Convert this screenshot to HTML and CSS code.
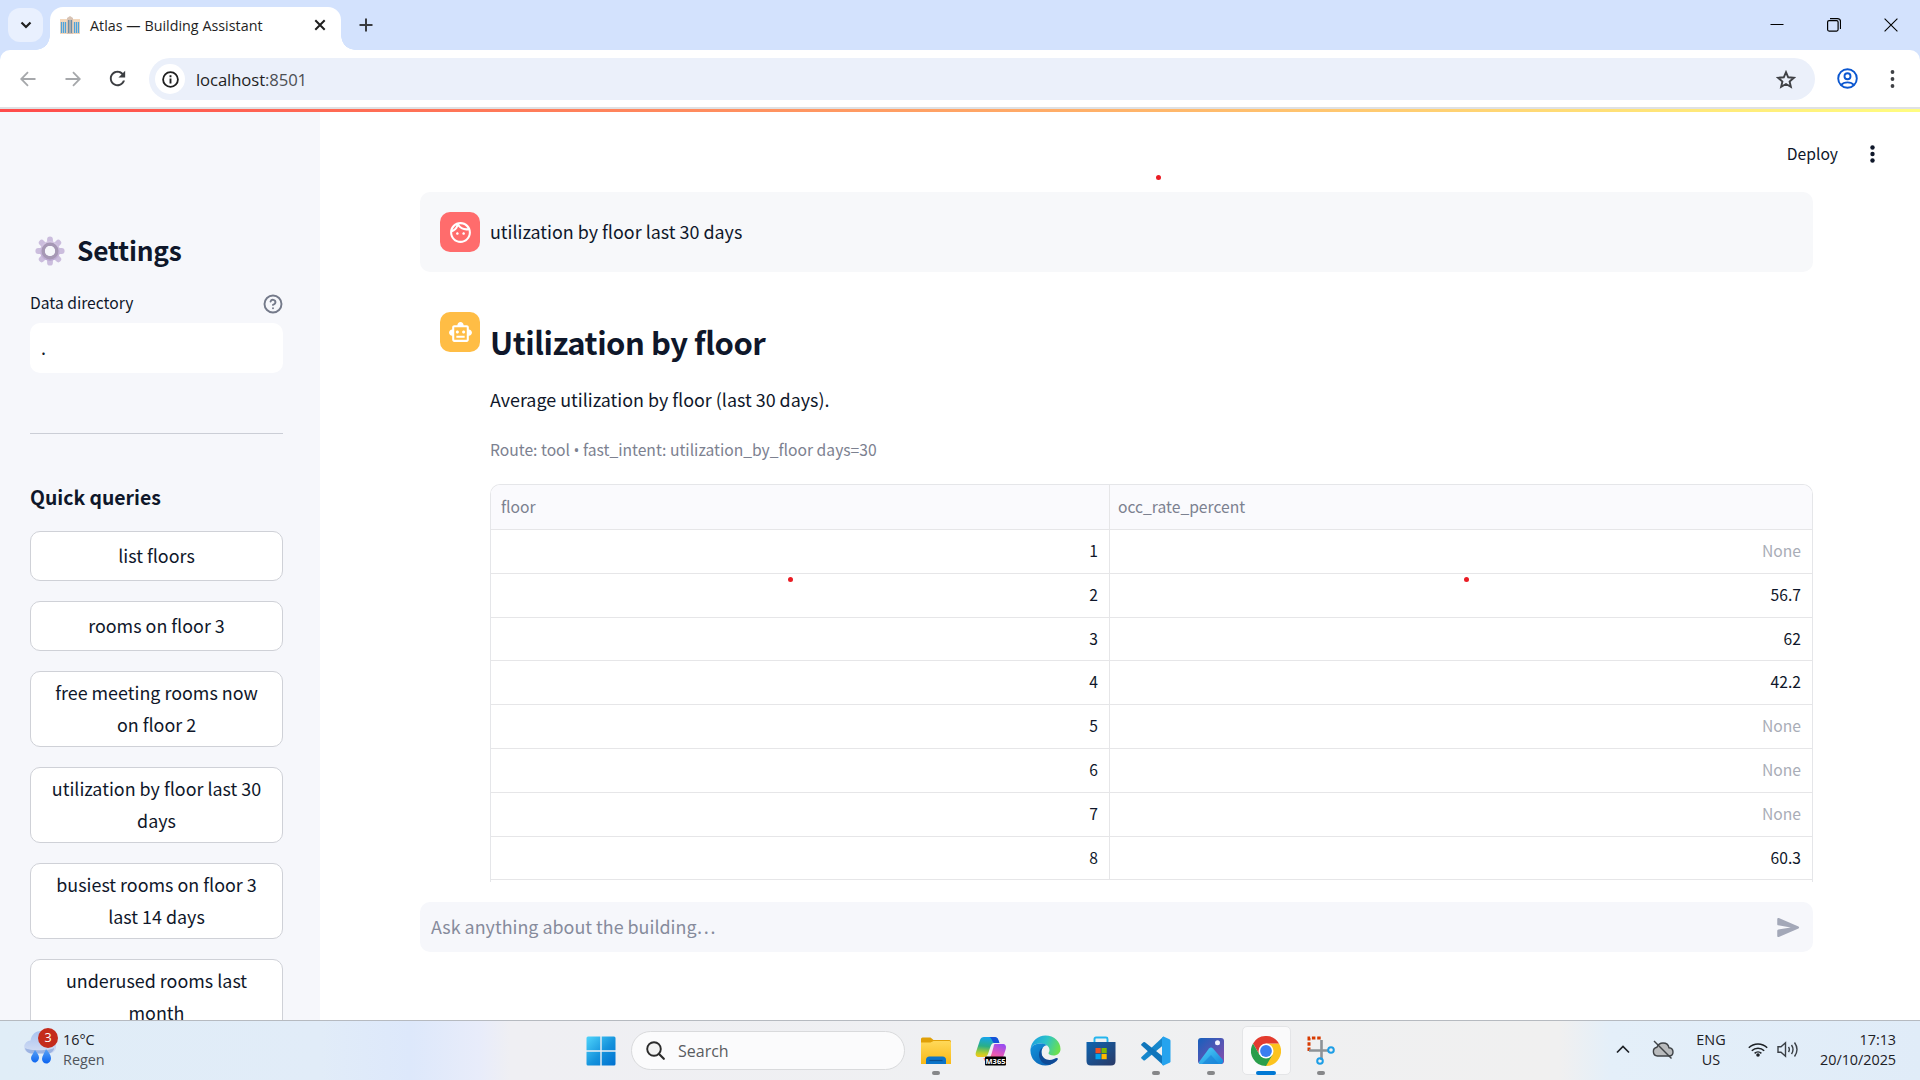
FILE: index.html
```html
<!DOCTYPE html>
<html lang="en">
<head>
<meta charset="utf-8">
<title>Atlas — Building Assistant</title>
<link rel="stylesheet" href="styles.css">
</head>
<body>
<div class="screen">
  <header class="tabstrip">
    <div class="tab-search"><svg width="12" height="8" viewBox="0 0 12 8"><path d="M1.5 1.5 6 6l4.5-4.5" fill="none" stroke="#1f1f1f" stroke-width="2.2"/></svg></div>
    <div class="tab">
      <svg class="favicon" width="20" height="18" viewBox="0 0 20 18"><path d="M0 3h7v15H0zM13 3h7v15h-7z" fill="#f3d8bd"/><path d="M7 2l3-2 3 2v16H7z" fill="#d8c3b4"/><path d="M1.5 6v11M3.5 6v11M5.5 6v11M14.5 6v11M16.5 6v11M18.5 6v11" stroke="#4fa3dc" stroke-width="1.3"/><path d="M8.7 4v13M11.3 4v13" stroke="#6b8ea8" stroke-width="1.4"/></svg>
      <span class="tab-title">Atlas — Building Assistant</span>
      <svg class="tab-close" width="12" height="12" viewBox="0 0 12 12"><path d="M1.3 1.3l9.4 9.4M10.7 1.3l-9.4 9.4" stroke="#1f1f1f" stroke-width="2"/></svg>
    </div>
    <svg class="tab-new" width="14" height="14" viewBox="0 0 14 14"><path d="M7 .5v13M.5 7h13" stroke="#3a3c40" stroke-width="2"/></svg>
    <div class="window-buttons">
      <svg width="14" height="14" viewBox="0 0 14 14"><path d="M.5 6.500h13" stroke="#000" stroke-width="1"/></svg>
      <svg width="14" height="14" viewBox="0 0 14 14"><rect x=".6" y="2.6" width="10.5" height="10.5" rx="1.5" fill="none" stroke="#000" stroke-width="1.2"/><path d="M3 .6h7.500a3 3 0 0 1 3 3V11" fill="none" stroke="#000" stroke-width="1.2"/></svg>
      <svg width="14" height="14" viewBox="0 0 14 14"><path d="M.6.6l12.800 12.800M13.400.6L.6 13.400" stroke="#000" stroke-width="1.1"/></svg>
    </div>
  </header>

  <div class="toolbar-back">
  <div class="toolbar">
    <svg class="nav-back" width="16" height="16" viewBox="0 0 16 16"><path d="M15.500 8H1.500M8 1.200 1.200 8 8 14.800" fill="none" stroke="#a6a8ab" stroke-width="1.800"/></svg>
    <svg class="nav-forward" width="16" height="16" viewBox="0 0 16 16"><path d="M.5 8h14M8 1.200 14.800 8 8 14.800" fill="none" stroke="#a6a8ab" stroke-width="1.800"/></svg>
    <svg class="nav-reload" width="23" height="23" viewBox="0 0 24 24"><path fill="#3c3e42" d="M17.650 6.350C16.200 4.900 14.210 4 12 4c-4.420 0-7.990 3.580-7.990 8s3.570 8 7.990 8c3.730 0 6.840-2.550 7.730-6h-2.080c-.82 2.330-3.040 4-5.650 4-3.310 0-6-2.690-6-6s2.690-6 6-6c1.660 0 3.140.69 4.220 1.780L13 11h7V4l-2.350 2.350z"/></svg>
    <div class="omnibox">
      <span class="site-info"><svg width="17" height="17" viewBox="0 0 17 17"><circle cx="8.500" cy="8.500" r="7.400" fill="none" stroke="#1f1f1f" stroke-width="1.800"/><path d="M8.500 7.500v5M8.500 4.300v1.900" stroke="#1f1f1f" stroke-width="1.900"/></svg></span>
      <span class="url">localhost<span class="port">:8501</span></span>
      <svg class="star" width="20" height="19" viewBox="0 0 20 19"><path d="M10 2.200l2.200 5.100 5.600.5-4.200 3.700 1.250 5.400L10 14l-4.850 2.900 1.250-5.400L2.200 7.800l5.600-.5z" fill="none" stroke="#3f4145" stroke-width="1.900"/></svg>
    </div>
    <svg class="profile" width="21" height="21" viewBox="0 0 21 21"><g fill="none" stroke="#0b57d0" stroke-width="1.900"><circle cx="10.500" cy="10.500" r="9.300"/><circle cx="10.500" cy="8.300" r="3"/><path d="M4 17c1.700-1.900 4-2.600 6.500-2.600s4.800.7 6.500 2.600"/></g></svg>
    <svg class="menu" width="5" height="18" viewBox="0 0 5 18"><g fill="#3f4145"><circle cx="2.500" cy="2" r="1.900"/><circle cx="2.500" cy="9" r="1.900"/><circle cx="2.500" cy="16" r="1.900"/></g></svg>
  </div>
  </div>
  <div class="toolbar-line"></div>

  <div class="app">
    <div class="rainbow"></div>
    <aside class="sidebar">
      <h2 class="settings">
        <svg width="30" height="30" viewBox="-15 -15 30 30"><defs><linearGradient id="gear" x1="0" y1="0" x2="0" y2="1"><stop offset="0" stop-color="#d6c9e4"/><stop offset="1" stop-color="#b9a6d0"/></linearGradient></defs><g stroke="#cbbddd" stroke-width="5.800" stroke-linecap="round"><path d="M0-11.700V11.700M-11.700 0H11.700M-8.300-8.300 8.300 8.300M-8.300 8.300 8.300-8.300"/></g><circle r="10" fill="url(#gear)"/><circle r="6.800" fill="#f6f7fb" stroke="#a698b5" stroke-width="3.400"/><circle r="5" fill="#f6f7fb"/></svg>
        <span>Settings</span>
      </h2>
      <div class="field-label">
        <span>Data directory</span>
        <svg width="20" height="20" viewBox="0 0 24 24" fill="none" stroke="#747a8a" stroke-width="2.300" stroke-linecap="round"><circle cx="12" cy="12" r="10.200"/><path d="M9.090 9a3 3 0 0 1 5.830 1c0 2-3 3-3 3M12 17h.01"/></svg>
      </div>
      <div class="field">.</div>
      <hr class="divider">
      <h4 class="quick-title">Quick queries</h4>
      <div class="queries">
        <div class="query">list floors</div>
        <div class="query">rooms on floor 3</div>
        <div class="query">free meeting rooms now<br>on floor 2</div>
        <div class="query">utilization by floor last 30<br>days</div>
        <div class="query">busiest rooms on floor 3<br>last 14 days</div>
        <div class="query">underused rooms last<br>month</div>
      </div>
    </aside>

    <main class="main">
      <div class="app-header">
        <span class="deploy">Deploy</span>
        <svg width="5" height="18" viewBox="0 0 5 18"><g fill="#0f172a"><circle cx="2.500" cy="2.500" r="2.200"/><circle cx="2.500" cy="9" r="2.200"/><circle cx="2.500" cy="15.500" r="2.200"/></g></svg>
      </div>
      <section class="chat">
        <article class="message user">
          <div class="avatar avatar-user"><svg width="25" height="25" viewBox="0 0 24 24"><path fill="#fff" d="M10.250 13c0 .69-.56 1.250-1.250 1.250S7.750 13.690 7.750 13s.56-1.250 1.250-1.250 1.250.56 1.250 1.250zM15 11.750c-.69 0-1.250.56-1.250 1.250s.56 1.250 1.250 1.250 1.250-.56 1.250-1.250-.56-1.250-1.250-1.250zm7 .25c0 5.520-4.480 10-10 10S2 17.520 2 12 6.480 2 12 2s10 4.480 10 10zM10.660 4.120C12.060 6.440 14.600 8 17.500 8c.46 0 .91-.05 1.340-.12C17.440 5.560 14.900 4 12 4c-.46 0-.91.05-1.340.12zM4.420 9.470c1.710-.97 3.030-2.550 3.660-4.440C6.370 6 5.050 7.580 4.420 9.470zM20 12c0-.78-.12-1.530-.33-2.240-.7.15-1.420.24-2.170.24-3.130 0-5.920-1.440-7.760-3.690C8.690 8.870 6.600 10.880 4 11.860c.01.04 0 .09 0 .14 0 4.420 3.580 8 8 8s8-3.580 8-8z"/></svg></div>
          <p class="user-text">utilization by floor last 30 days</p>
        </article>
        <article class="message bot">
          <div class="avatar avatar-bot"><svg width="25" height="25" viewBox="0 0 24 24"><path fill="#fff" d="M20 9V7c0-1.100-.9-2-2-2h-3c0-1.660-1.340-3-3-3S9 3.340 9 5H6c-1.100 0-2 .9-2 2v2c-1.660 0-3 1.340-3 3s1.340 3 3 3v4c0 1.100.9 2 2 2h12c1.100 0 2-.9 2-2v-4c1.660 0 3-1.340 3-3s-1.340-3-3-3zm-2 10H6V7h12v12zm-9-6c-.83 0-1.500-.67-1.500-1.500S8.170 10 9 10s1.500.67 1.500 1.500S9.830 13 9 13zm7.500-1.500c0 .83-.67 1.500-1.500 1.500s-1.500-.67-1.500-1.500.67-1.500 1.500-1.500 1.500.67 1.500 1.500zM8 15h8v2H8v-2z"/></svg></div>
          <div class="answer">
            <h2 class="answer-title">Utilization by floor</h2>
            <p class="answer-text">Average utilization by floor (last 30 days).</p>
            <p class="caption">Route: tool <span class="bullet">•</span> fast_intent: utilization_by_floor days=30</p>
            <div class="grid">
              <div class="row head"><span>floor</span><span>occ_rate_percent</span></div>
              <div class="row"><span>1</span><span class="none">None</span></div>
              <div class="row"><span>2</span><span>56.7</span></div>
              <div class="row"><span>3</span><span>62</span></div>
              <div class="row"><span>4</span><span>42.2</span></div>
              <div class="row"><span>5</span><span class="none">None</span></div>
              <div class="row"><span>6</span><span class="none">None</span></div>
              <div class="row"><span>7</span><span class="none">None</span></div>
              <div class="row"><span>8</span><span>60.3</span></div>
              <div class="row"></div>
            </div>
          </div>
        </article>
      </section>
      <div class="chat-input">
        <span>Ask anything about the building…</span>
        <svg width="27" height="27" viewBox="0 0 24 24"><path fill="#a3a8b8" d="M3.400 20.400l17.450-7.480c.81-.35.81-1.490 0-1.840L3.400 3.600c-.66-.29-1.390.2-1.390.91L2 9.120c0 .5.37.93.87.99L14 12 2.870 13.880c-.5.07-.87.5-.87 1v4.610c0 .71.73 1.200 1.400.91z"/></svg>
      </div>
    </main>
    <i class="mark mark-a"></i><i class="mark mark-b"></i><i class="mark mark-c"></i>
  </div>

  <footer class="taskbar">
    <div class="weather">
      <div class="weather-icon">
        <svg width="32" height="36" viewBox="0 0 32 36"><defs><linearGradient id="cl" x1="0" y1="0" x2="0" y2="1"><stop offset="0" stop-color="#a9c3f0"/><stop offset="1" stop-color="#d5def3"/></linearGradient><linearGradient id="dr" x1="0" y1="0" x2="0" y2="1"><stop offset="0" stop-color="#5ba4f5"/><stop offset="1" stop-color="#0a63f0"/></linearGradient></defs><path d="M7 23.500a6.500 6.500 0 0 1-.5-13C7.500 4 12 1 17 1c6 0 9 4 9.500 9.500a6.500 6.500 0 0 1-2 13z" fill="url(#cl)"/><path d="M1 18c1 4 4 5.500 7 5.500h15c4 0 7-2 7-5.500-4 3-25 3-29 0z" fill="#9cb4e2"/><path d="M11 20c2 3 4 5 4 7.500s-2 5-4 5-4-2-4-4.500C7 26 9.500 23 11 20zM22 19c2.500 3 5 6 5 9s-2 5.500-4.500 5.500-4.500-2-4.500-4.500C18 26 20.500 23 22 19z" fill="url(#dr)"/></svg>
        <span class="badge">3</span>
      </div>
      <div class="weather-text"><span>16°C</span><span class="dim">Regen</span></div>
    </div>

    <div class="dock">
      <div class="cell"><svg width="30" height="30" viewBox="0 0 30 30"><defs><linearGradient id="win" x1="0" y1="0" x2="1" y2="1"><stop offset="0" stop-color="#4fd4fb"/><stop offset=".55" stop-color="#1492dc"/><stop offset="1" stop-color="#0070d0"/></linearGradient></defs><path d="M.5 2Q.5.500 2 .5h12.300v13.800H.5zM15.700.5H28q1.500 0 1.500 1.500v12.300H15.700zM.5 15.700h13.800v13.800H2Q.5 29.500.5 28zM15.700 15.700h13.800V28q0 1.500-1.500 1.500H15.700z" fill="url(#win)"/></svg></div>
      <div class="search"><svg width="19" height="19" viewBox="0 0 19 19"><circle cx="8" cy="8" r="6.800" fill="#f2f2f2" stroke="#2b2b2b" stroke-width="1.900"/><path d="M12.800 12.800l5 5" stroke="#2b2b2b" stroke-width="2.200" stroke-linecap="round"/></svg><span>Search</span></div>
      <div class="cell running"><svg width="30" height="28" viewBox="0 0 30 28"><defs><linearGradient id="fo" x1="0" y1="0" x2="0" y2="1"><stop offset="0" stop-color="#ffd95a"/><stop offset="1" stop-color="#f9b916"/></linearGradient></defs><path d="M0 2q0-1.500 1.500-1.500h8L12.500 3H28.500Q30 3 30 4.500V8H0z" fill="#e0a008"/><path d="M0 5.500h9.500L12.500 4h16Q30 4 30 5.500V27H0z" fill="url(#fo)"/><path d="M5 27v-4q0-3.500 3.500-3.500h13q3.500 0 3.500 3.500v4z" fill="#0c74c8"/><path d="M8.500 23.500h13" stroke="#0a4f90" stroke-width="1.200"/></svg></div>
      <div class="cell"><svg width="32" height="30" viewBox="0 0 32 30"><defs><linearGradient id="ca" x1=".3" y1="0" x2=".2" y2="1"><stop offset="0" stop-color="#16a4ea"/><stop offset=".45" stop-color="#2aaf86"/><stop offset=".8" stop-color="#b8cf2c"/><stop offset="1" stop-color="#f6c61c"/></linearGradient><linearGradient id="cb" x1=".7" y1="0" x2=".3" y2="1"><stop offset="0" stop-color="#9a4df0"/><stop offset=".5" stop-color="#e558b8"/><stop offset="1" stop-color="#ff7a4f"/></linearGradient></defs><path d="M9 1h10c3 0 4 2 5 6h-5c-2 0-3 1.500-4 5l-2 6c-.8 2-2 3-4 3H4c-3 0-4-2-3-5L5 4c.7-2 2-3 4-3z" fill="url(#ca)"/><path d="M14 1h6c2.500 0 3.500 2 4.500 6h-5c-2.500 0-2.500-6-5.500-6z" fill="#1453d8"/><path d="M20 8h7.500c3 0 4 2 3.300 5l-3.300 10c-.7 3-2 4-5 4h-8c-4 0-5-2-6-5h4c2 0 3-1 4-4l2-7c.4-2 .5-3 1.500-3z" fill="url(#cb)"/><rect x="10" y="20.500" width="21" height="9" rx="1" fill="#000"/><text x="20.500" y="27.800" text-anchor="middle" class="m365">M365</text></svg></div>
      <div class="cell"><svg width="31" height="31" viewBox="0 0 31 31"><defs><linearGradient id="ed" x1="0" y1=".2" x2="1" y2=".5"><stop offset="0" stop-color="#1b9de2"/><stop offset=".5" stop-color="#2cc3c8"/><stop offset="1" stop-color="#6be04e"/></linearGradient><linearGradient id="ee" x1="0" y1="0" x2="1" y2="1"><stop offset="0" stop-color="#1295dd"/><stop offset="1" stop-color="#0b58ac"/></linearGradient></defs><path d="M.5 14C1.500 6 8 .5 15.500.5 24 .5 30.500 6.500 30.500 14c0 4-3 6.500-7 6.500-3 0-5-1-5-2.200 0-.8 1-1.300 1-3.300 0-3.500-3.500-6.500-8-6.500C6 8.500 2 10 .5 14z" fill="url(#ed)"/><path d="M.5 14C2 10 6 8.500 11.500 8.500c2 0 4 .6 5.500 1.800-3 0-5.500 3-5.500 7.200 0 6.500 6 12 13 9.500-2.500 2.500-5.500 3.500-9 3.500C6 30.500-.3 23 .5 14z" fill="url(#ee)"/><path d="M13 12.500c-1.500 1.500-2 3.500-1.500 6 1 5.500 7 8 12.500 5.500 2-1 3.500-1.500 4 0-1.500 3-6 5.500-9.500 5.500-6 0-9.500-5-9.500-10 0-3 1.500-6 4-7z" fill="#0e4a96"/></svg></div>
      <div class="cell"><svg width="30" height="30" viewBox="0 0 30 30"><defs><linearGradient id="st" x1="0" y1="0" x2="1" y2="1"><stop offset="0" stop-color="#0e64b0"/><stop offset="1" stop-color="#2a3966"/></linearGradient></defs><path d="M8.500 8V3q0-1.500 1.500-1.500h10q1.500 0 1.500 1.500v5" fill="none" stroke="#25b5ee" stroke-width="1.900"/><path d="M.5 6h29v19q0 4.500-4.500 4.500H5Q.5 29.500.5 25z" fill="url(#st)"/><path fill="#f25022" d="M9.500 12h5.200v5.200H9.500z"/><path fill="#7fba00" d="M15.500 12h5.200v5.200h-5.200z"/><path fill="#00a4ef" d="M9.500 18h5.200v5.200H9.500z"/><path fill="#ffb900" d="M15.500 18h5.200v5.200h-5.200z"/></svg></div>
      <div class="cell running"><svg width="30" height="30" viewBox="0 0 30 30"><path d="M22.500.5v8.500L4 24.200q-.8.600-1.600 0l-1.900-1.700q-.8-.8 0-1.600z" fill="#1687cc"/><path d="M22.500 29.500V21L4 6.300q-.8-.6-1.600 0L.5 8q-.8.800 0 1.600z" fill="#0f75bb"/><path d="M22.500.5 28.500 3.200q1 .5 1 1.600v20.400q0 1.100-1 1.600l-6 2.700q-1 0-1.500-1.500V2q.5-1.500 1.500-1.500z" fill="#25a3ee"/></svg></div>
      <div class="cell running"><svg width="26" height="26" viewBox="0 0 26 26"><defs><linearGradient id="ph" x1="0" y1="0" x2="1" y2="1"><stop offset="0" stop-color="#1660bd"/><stop offset="1" stop-color="#8a4dac"/></linearGradient><linearGradient id="pi" x1="0" y1="0" x2="1" y2="1"><stop offset="0" stop-color="#51d3fa"/><stop offset="1" stop-color="#1488dc"/></linearGradient></defs><rect width="26" height="26" rx="3" fill="url(#ph)"/><circle cx="19.500" cy="4.800" r="2.500" fill="#f3f5ff"/><path d="M1 24 11 10.500q2-2 4 0L25 22q1 3-2 4H3q-2.500 0-2-2z" fill="url(#pi)"/><path d="M4 26l9-9 8 9z" fill="#1a7fd6" opacity=".6"/></svg></div>
      <div class="cell active"><svg width="30" height="30" viewBox="-15 -15 30 30"><path d="M0 0 13-7.500A15 15 0 0 1 0 15z" fill="#fcc31e"/><path d="M0-7.500H13L6 0zM6.500 3.750 0 15l-3-8z" fill="#fcc31e"/><path d="M0-7.500H13A15 15 0 0 0-13-7.500L-6.500 3.750z" fill="#e33b2e"/><path d="M-6.500 3.750-13-7.500A15 15 0 0 0 0 15L6.500 3.750z" fill="#2a9e4b"/><circle r="7.500" fill="#fff"/><circle r="5.900" fill="#3a7ef0"/></svg></div>
      <div class="cell running"><svg width="28" height="29" viewBox="0 0 28 29"><path d="M2 15V2h12" fill="none" stroke="#d83b01" stroke-width="3" stroke-dasharray="3.500 1.800"/><path d="M2 14.500h20M14.500 4v20" stroke="#8c9297" stroke-width="2.600"/><circle cx="24" cy="14" r="2.800" fill="none" stroke="#1d9ee6" stroke-width="2"/><circle cx="13" cy="25" r="2.800" fill="none" stroke="#1d9ee6" stroke-width="2"/></svg></div>
    </div>

    <div class="tray">
      <svg class="chev" width="14" height="9" viewBox="0 0 14 9"><path d="M1 7.500 7 1.500l6 6" fill="none" stroke="#1d2126" stroke-width="1.700"/></svg>
      <svg class="cloud" width="22" height="20" viewBox="0 0 22 20"><path d="M5.500 16a4.400 4.400 0 0 1-.6-8.700C6 4.500 8 3 11 3c3.500 0 5.500 2 6 4.800 2.500.3 4 2 4 4.200S19.500 16 17 16z" fill="#b9bbbd" stroke="#3f4347" stroke-width="1.400"/><path d="M2 1l17.500 17.500" stroke="#3f4347" stroke-width="1.400"/></svg>
      <div class="lang"><span>ENG</span><span>US</span></div>
      <svg class="wifi" width="20" height="15" viewBox="0 0 20 15"><g fill="none" stroke="#1d2126" stroke-width="1.500"><path d="M.8 5.800a13 13 0 0 1 18.400 0M3.800 8.800a8.800 8.800 0 0 1 12.400 0M6.600 11.400a4.900 4.900 0 0 1 6.800 0"/></g><circle cx="10" cy="13" r="1.800" fill="#1d2126"/></svg>
      <svg class="sound" width="22" height="17" viewBox="0 0 22 17"><g fill="none" stroke="#3a3f45" stroke-width="1.400"><path d="M1 5.800h3l4.500-4v13.400l-4.500-4H1z"/><path d="M11.500 6q1.700 2.500 0 5M14.500 4q3 4.500 0 9M17.500 1.500q5 7 0 14"/></g></svg>
      <div class="clock"><span>17:13</span><span>20/10/2025</span></div>
    </div>
  </footer>
</div>
</body>
</html>
```
FILE: styles.css
```css
* { box-sizing: border-box; }
body { margin: 0; overflow: hidden; }
h2, h4, p { margin: 0; }
svg { display: block; flex: none; }

.screen {
  width: 1920px; height: 1080px; overflow: hidden;
  display: flex; flex-direction: column;
  font-family: "Open Sans", "Noto Sans", sans-serif;
  background: #fff;
}

/* browser chrome */
.tabstrip { height: 50px; background: #d3e2fd; display: flex; align-items: center; flex: none; }
.tab-search {
  width: 35px; height: 34px; margin-left: 8px; border-radius: 12px;
  background: #e9f0fe; display: flex; align-items: center; justify-content: center;
}
.tab {
  position: relative; align-self: flex-end; width: 291px; height: 43px; margin-left: 7px;
  padding: 0 15px 7px 10px; background: #fff; border-radius: 13px 13px 0 0;
  display: flex; align-items: center;
}
.tab::before, .tab::after { content: ""; position: absolute; bottom: 0; width: 14px; height: 14px; }
.tab::before { left: -14px; background: radial-gradient(circle at 0 0, transparent 13.500px, #fff 14px); }
.tab::after { right: -14px; background: radial-gradient(circle at 100% 0, transparent 13.500px, #fff 14px); }
.tab-title { margin-left: 10px; font-size: 14.300px; color: #1f1f1f; white-space: nowrap; flex: 1; letter-spacing: .02px; }
.tab-new { margin-left: 18px; }
.window-buttons { margin-left: auto; margin-right: 22px; display: flex; gap: 43px; }

.toolbar-back { background: #d3e2fd; flex: none; }
.toolbar { height: 57px; background: #fff; border-radius: 10px 10px 0 0; display: flex; align-items: center; }
.nav-back { margin-left: 20px; }
.nav-forward { margin-left: 29px; }
.nav-reload { margin-left: 25px; }
.omnibox {
  flex: 1; height: 42px; margin: 1px 0 0 20px; padding: 0 19px 0 6px;
  border-radius: 21px; background: #ebf0fa; display: flex; align-items: center;
}
.site-info { width: 30px; height: 30px; border-radius: 50%; background: #fff; display: flex; align-items: center; justify-content: center; }
.url { flex: 1; margin-left: 11px; font-size: 16.700px; color: #1f1f1f; letter-spacing: -.1px; }
.port { color: #4c4f54; }
.profile { margin-left: 22px; }
.menu { margin: 0 25px 0 32px; }
.toolbar-line { height: 2px; background: #dfe1e4; flex: none; }

/* app */
.app {
  position: relative; height: 911px; flex: none; display: flex; overflow: hidden;
  font-family: "Noto Sans CJK SC", "Noto Sans", sans-serif;
  font-size: 17.900px; line-height: 32px; color: #0f172a;
}
.rainbow { position: absolute; top: 0; left: 0; right: 0; height: 3px; background: linear-gradient(90deg, #ff4b4b, #fffd80); }
.sidebar { width: 320px; height: 911px; overflow: hidden; flex: none; background: #f6f7fb; padding: 120px 37px 0 30px; }
.settings { display: flex; align-items: center; gap: 12px; height: 42px; padding-left: 5px; font-size: 26.300px; font-weight: 600; line-height: 38px; letter-spacing: -.25px; }
.settings svg { margin-top: 1px; }
.settings span { margin-top: -1px; }
.field-label { display: flex; align-items: center; justify-content: space-between; height: 30px; margin-top: 18px; font-size: 15.670px; line-height: 26px; }
.field-label span { margin-top: -2px; }
.field-label svg { margin-top: -1px; }
.field { height: 50px; margin-top: 4px; padding: 8px 11px; border-radius: 10px; background: #fff; }
.divider { margin: 60px 0 0; border: 0; height: 1px; background: #cbced6; }
.quick-title { margin-top: 47px; height: 32px; font-size: 19.400px; font-weight: 600; line-height: 32px; }
.queries { display: flex; flex-direction: column; gap: 20px; margin-top: 18px; }
.query { padding: 7px 0 9px; border: 1px solid #cfd1d7; border-radius: 10px; background: #fff; text-align: center; line-height: 32px; }
.query:nth-child(n+3) { padding: 4px 0 6px; }

.main { flex: 1; display: flex; flex-direction: column; padding: 0 107px 0 100px; }
.app-header { height: 83px; margin-right: -62px; padding-top: 6px; display: flex; align-items: center; justify-content: flex-end; gap: 32px; font-size: 15.670px; flex: none; }
.app-header svg { margin-top: 1px; }
.chat { height: 690px; overflow: hidden; flex: none; }
.message { display: flex; gap: 10px; padding: 20px 0 20px 20px; border-radius: 10px; }
.user { background: #f7f8fa; height: 80px; }
.bot { margin-top: 20px; }
.avatar { width: 40px; height: 40px; border-radius: 10px; display: flex; align-items: center; justify-content: center; flex: none; }
.avatar-user { background: #ff6c6c; }
.avatar-bot { background: #ffbd45; }
.user-text { margin-top: 3px; }
.answer { flex: 1; }
.answer-title { margin-top: 9px; font-size: 31px; font-weight: 600; line-height: 42px; letter-spacing: -.47px; }
.answer-text { margin-top: 20px; }
.caption { margin-top: 21px; font-size: 15.670px; line-height: 28px; color: #7c8190; }
.bullet { font-family: "Open Sans", sans-serif; line-height: 1; }

/* data grid */
.grid { margin-top: 20px; border: 1px solid #e5e6e9; border-bottom: 0; border-radius: 10px 10px 0 0; overflow: hidden; font-size: 15.670px; line-height: 42px; }
.row { display: grid; grid-template-columns: 619px 1fr; height: 43.810px; border-bottom: 1px solid #e6e6e8; text-align: right; }
.row span { padding: 0 11px; }
.row span:first-child { border-right: 1px solid #e6e6e8; }
.head { height: 45px; background: #fafafd; color: #7c8190; text-align: left; line-height: 43px; }
.head span { padding: 0 10px; }
.head span + span { padding-left: 8px; }
.none { color: #a9adb7; }

.chat-input { height: 50px; margin-top: 20px; padding: 0 11px; border-radius: 10px; background: #f6f7fb; color: #868b9c; display: flex; align-items: center; justify-content: space-between; flex: none; }
.chat-input span { margin-top: -2px; }

/* pointer trail dots over the page */
.mark { position: absolute; width: 5px; height: 5px; border-radius: 50%; background: #ea1c24; }
.mark-a { left: 1156px; top: 66px; }
.mark-b { left: 788px; top: 468px; }
.mark-c { left: 1464px; top: 468px; }

/* taskbar */
.taskbar {
  height: 60px; flex: none; display: flex; align-items: center; border-top: 1px solid #b6bac0;
  background: linear-gradient(90deg, #e0edf7 0, #e1ecf8 320px, #dde8fb 410px, #e8ecfa 480px, #efeff3 510px, #eff0f2 1000px, #f0f0f0 1560px, #e4eff9 1610px, #e0ecf8 1920px);
  font-size: 14.400px; line-height: 20px; color: #1d2126;
}
.weather { width: 573px; padding: 0 0 2px 24px; display: flex; align-items: center; gap: 7px; }
.weather-icon { position: relative; width: 32px; height: 36px; margin-top: -4px; }
.badge { position: absolute; top: -2px; left: 14px; width: 20px; height: 20px; border-radius: 50%; background: #c42b1c; color: #fff; font-size: 12.500px; line-height: 19px; text-align: center; }
.weather-text { display: flex; flex-direction: column; }
.dim { color: #50555b; }
.dock { display: flex; align-items: center; height: 59px; width: 776px; }
.cell { position: relative; width: 49px; height: 49px; margin: 0 3px; display: flex; align-items: center; justify-content: center; border-radius: 5px; }
.cell:nth-child(n+3) { margin: 0 3.050px; }
.running::after, .active::after { content: ""; position: absolute; bottom: 0; width: 8px; height: 4px; border-radius: 2px; background: #868789; }
.active { background: #fafafb; border: 1px solid #e4e5e7; }
.active::after { width: 20px; background: #0078d4; bottom: -1px; }
.search { width: 274px; height: 39px; margin: 0 3px 0 3px; padding: 0 14px; border: 1px solid #d9dadc; border-radius: 20px; background: #fbfbfc; display: flex; align-items: center; gap: 13px; font-size: 16px; color: #5a5c5f; }
.m365 { font: bold 7.500px "Open Sans", sans-serif; fill: #fff; }
.tray { flex: 1; display: flex; align-items: center; padding: 0 24px 2px 267px; }
.cloud { margin-left: 22px; }
.lang { width: 40px; margin-left: 17px; display: flex; flex-direction: column; text-align: center; }
.wifi { margin-left: 17px; }
.sound { margin-left: 9px; }
.clock { flex: 1; display: flex; flex-direction: column; text-align: right; letter-spacing: -.05px; }
```
